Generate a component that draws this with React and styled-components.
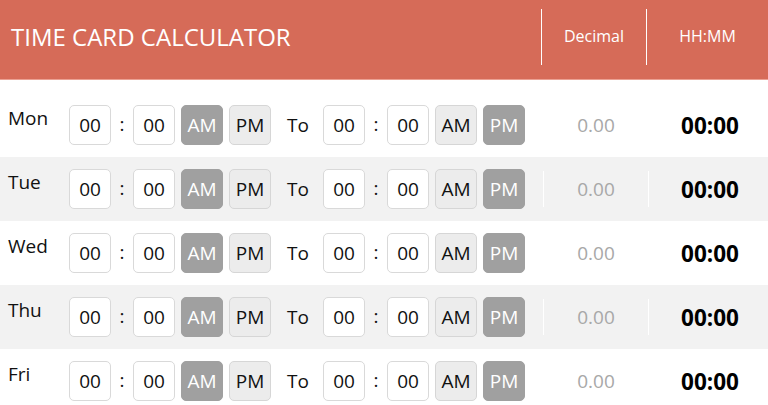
import React from "react";
import styled, { createGlobalStyle } from "styled-components";

const Global = createGlobalStyle`
  html, body { margin: 0; padding: 0; background: #fff; }
  body { font-family: "Open Sans", "Noto Sans", sans-serif; color: #111; overflow: hidden; }
  * { box-sizing: border-box; }
`;

const Page = styled.div`
  width: 768px;
  height: 405px;
  overflow: hidden;
`;

const Header = styled.header`
  display: flex;
  align-items: stretch;
  height: 80px;
  background: #d66b58;
  border-bottom: 1px solid #eba193;
  color: #fff;
`;

const Title = styled.h1`
  flex: 1;
  margin: 0;
  padding: 0 0 6px 11px;
  display: flex;
  align-items: center;
  font-size: 24px;
  font-weight: 400;
  letter-spacing: 0;
`;

const HeadCell = styled.div`
  width: ${(p) => p.$w}px;
  margin: 9px 0 14px;
  border-left: 1px solid #fff;
  display: flex;
  align-items: center;
  justify-content: center;
  font-size: 16px;
  padding-bottom: 2px;
`;

const Body = styled.div`
  padding-top: 13px;
`;

const Row = styled.div`
  display: flex;
  align-items: center;
  height: 64px;
  padding-left: 8px;
  background: ${(p) => (p.$alt ? "#f2f2f2" : "#fff")};
`;

const Day = styled.div`
  width: 61px;
  align-self: flex-start;
  margin-top: 12px;
  font-size: 19px;
  color: #111;
`;

const Box = styled.div`
  width: 42px;
  height: 40px;
  border: 1px solid #d9d9d9;
  border-radius: 5px;
  background: #fff;
  display: flex;
  align-items: center;
  justify-content: center;
  font-size: 19px;
  color: #111;
`;

const Colon = styled.span`
  width: 22px;
  text-align: center;
  font-size: 19px;
  color: #111;
  padding-bottom: 2px;
`;

const Toggle = styled.div`
  width: 42px;
  height: 40px;
  margin-left: 6px;
  border-radius: 5px;
  display: flex;
  align-items: center;
  justify-content: center;
  font-size: 19px;
  background: ${(p) => (p.$on ? "#a0a0a0" : "#ececec")};
  color: ${(p) => (p.$on ? "#fff" : "#111")};
  border: 1px solid ${(p) => (p.$on ? "#a0a0a0" : "#d6d6d6")};
`;

const To = styled.span`
  width: 52px;
  text-align: center;
  font-size: 19px;
  color: #111;
  padding-left: 2px;
`;

const Cell = styled.div`
  width: ${(p) => p.$w}px;
  height: 36px;
  margin-left: ${(p) => p.$ml || 0}px;
  border-left: 1px solid #fff;
  display: flex;
  align-items: center;
  justify-content: center;
`;

const Decimal = styled.span`
  font-size: 19px;
  color: #a8a8a8;
`;

const Total = styled.span`
  font-size: 22.5px;
  font-weight: 700;
  color: #000;
  padding-left: 4px;
`;

const days = ["Mon", "Tue", "Wed", "Thu", "Fri"];

function TimeGroup({ am }) {
  return (
    <>
      <Box>00</Box>
      <Colon>:</Colon>
      <Box>00</Box>
      <Toggle $on={am}>AM</Toggle>
      <Toggle $on={!am}>PM</Toggle>
    </>
  );
}

export default function App() {
  return (
    <Page>
      <Global />
      <Header>
        <Title>TIME CARD CALCULATOR</Title>
        <HeadCell $w={105}>Decimal</HeadCell>
        <HeadCell $w={122}>HH:MM</HeadCell>
      </Header>
      <Body>
        {days.map((d, i) => (
          <Row key={d} $alt={i % 2 === 1}>
            <Day>{d}</Day>
            <TimeGroup am />
            <To>To</To>
            <TimeGroup am={false} />
            <Cell $w={105} $ml={18}>
              <Decimal>0.00</Decimal>
            </Cell>
            <Cell $w={119}>
              <Total>00:00</Total>
            </Cell>
          </Row>
        ))}
      </Body>
    </Page>
  );
}
